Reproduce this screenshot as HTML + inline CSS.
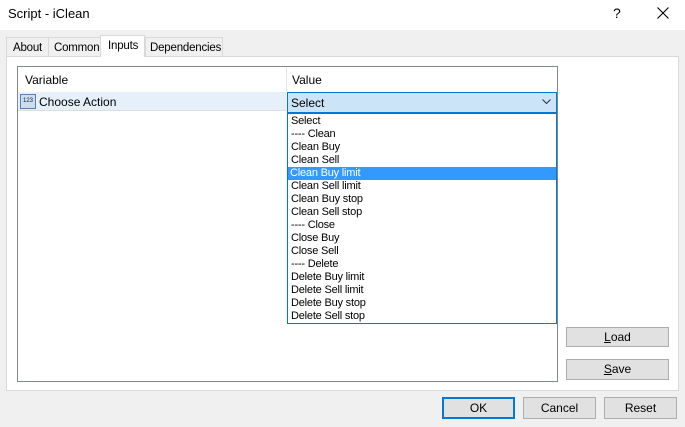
<html><head><style>
body{margin:0;width:685px;height:427px;background:#f0f0f0;font-family:"Liberation Sans",sans-serif;font-size:12px;color:#000;position:relative;overflow:hidden}
div{position:absolute;box-sizing:border-box;white-space:nowrap}
.btn{background:#e1e1e1;border:1px solid #adadad;text-align:center;line-height:18px}
.it{left:2px;height:13px;line-height:13px;font-size:11px;width:266px;padding-left:1px;letter-spacing:-0.2px}
.tab{font-size:11.5px;letter-spacing:-0.2px}
</style></head><body>
<div style="left:0;top:0;width:685px;height:30px;background:#fff"></div>
<div style="left:8px;top:6px;font-size:13px">Script - iClean</div>
<div style="left:613px;top:5px;font-size:14px">?</div>
<svg style="position:absolute;left:657px;top:7px" width="12" height="12"><path d="M0.5 0.5L11.5 11.5M11.5 0.5L0.5 11.5" stroke="#000" stroke-width="1.1"/></svg>
<div style="left:6px;top:56px;width:673px;height:335px;background:#fff;border:1px solid #d9d9d9"></div>
<div class="tab" style="left:6px;top:37px;width:43px;height:20px;background:#f0f0f0;border:1px solid #d9d9d9;padding:4px 0 0 6px">About</div>
<div class="tab" style="left:48px;top:37px;width:53px;height:20px;background:#f0f0f0;border:1px solid #d9d9d9;padding:4px 0 0 5px">Common</div>
<div class="tab" style="left:100px;top:35px;width:45px;height:22px;background:#fff;border:1px solid #d9d9d9;border-bottom:none;padding:4px 0 0 7px">Inputs</div>
<div class="tab" style="left:145px;top:37px;width:78px;height:20px;background:#f0f0f0;border:1px solid #d9d9d9;padding:4px 0 0 4px">Dependencies</div>
<div style="left:17px;top:66px;width:541px;height:316px;border:1px solid #828790;background:#fff"></div>
<div style="left:25px;top:73px">Variable</div>
<div style="left:286px;top:67px;width:1px;height:25px;background:#e5e5e5"></div>
<div style="left:292px;top:73px">Value</div>
<div style="left:18px;top:92px;width:268px;height:19px;background:#e5f0fb;border-bottom:1px solid #ddd"></div>
<div style="left:20px;top:94px;width:16px;height:15px;background:#cde;border:1px solid #5580b0;font-size:6px;line-height:13px;text-align:center;color:#124">123</div>
<div style="left:39px;top:95px">Choose Action</div>
<div style="left:287px;top:92px;width:270px;height:21px;background:#cce4f7;border:1px solid #0078d7;padding:3px 0 0 3px">Select</div>
<svg style="position:absolute;left:542px;top:99px" width="9" height="6"><path d="M0.5 0.5L4.5 4.5L8.5 0.5" stroke="#333" fill="none"/></svg>
<div style="left:287px;top:113px;width:270px;height:211px;background:#fff;border:1px solid #0078d7">
<div class="it" style="top:1px">Select</div>
<div class="it" style="top:14px">---- Clean</div>
<div class="it" style="top:27px">Clean Buy</div>
<div class="it" style="top:40px">Clean Sell</div>
<div class="it" style="top:53px;background:#3399ff;color:#fff;left:0;width:268px;padding-left:2px">Clean Buy limit</div>
<div class="it" style="top:66px">Clean Sell limit</div>
<div class="it" style="top:79px">Clean Buy stop</div>
<div class="it" style="top:92px">Clean Sell stop</div>
<div class="it" style="top:105px">---- Close</div>
<div class="it" style="top:118px">Close Buy</div>
<div class="it" style="top:131px">Close Sell</div>
<div class="it" style="top:144px">---- Delete</div>
<div class="it" style="top:157px">Delete Buy limit</div>
<div class="it" style="top:170px">Delete Sell limit</div>
<div class="it" style="top:183px">Delete Buy stop</div>
<div class="it" style="top:196px">Delete Sell stop</div>
</div>
<div class="btn" style="left:566px;top:327px;width:103px;height:20px"><u>L</u>oad</div>
<div class="btn" style="left:566px;top:359px;width:103px;height:21px"><u>S</u>ave</div>
<div class="btn" style="left:442px;top:397px;width:73px;height:22px;border:2px solid #0078d7;line-height:18px">OK</div>
<div class="btn" style="left:523px;top:397px;width:73px;height:22px;line-height:20px">Cancel</div>
<div class="btn" style="left:604px;top:397px;width:73px;height:22px;line-height:20px">Reset</div>
</body></html>
